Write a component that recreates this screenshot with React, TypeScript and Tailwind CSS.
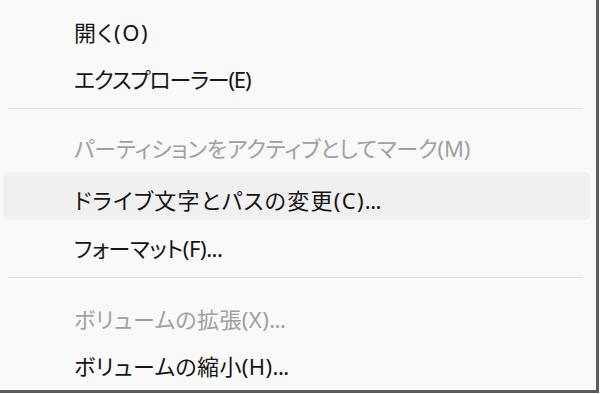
import React from "react";

const font = {
  fontFamily: '"Noto Sans", "Noto Sans CJK JP", sans-serif',
};

function Item({
  label,
  dots,
  disabled,
  active,
  h,
  pt,
  tr,
}: {
  label: string;
  dots?: boolean;
  disabled?: boolean;
  active?: boolean;
  h: string;
  pt?: string;
  tr?: string;
}) {
  return (
    <div
      className={
        h +
        " " +
        (pt ?? "") +
        " flex items-center text-[22px] leading-none [font-feature-settings:'palt'] " +
        (active ? "ml-[3px] mr-[6px] pl-[71px] bg-[#f0f0f0] rounded-[5px] " : "pl-[74px] ") +
        (disabled ? "text-[#a0a0a0]" : "text-[#151515]")
      }
    >
      <span className={tr ?? ""}>{label}</span>
      {dots && <span className="tracking-[-0.5px]">...</span>}
    </div>
  );
}

export default function App() {
  return (
    <div className="w-[601px] h-[394px] bg-white" style={font}>
      <div className="w-[599px] h-[393px] bg-[#f9f9f9] border-r-[3px] border-b-[3px] border-[#5c5c5c] pt-[8px] flex flex-col">
        <Item h="h-[47px]" tr="tracking-[1.5px]" label="開く(O)" />
        <Item h="h-[47px]" tr="tracking-[-1.2px]" label="エクスプローラー(E)" />
        <div className="h-[22px] pt-[6px] pl-[8px] pr-[13px]">
          <div className="h-[1px] bg-[#e2e2e2]" />
        </div>
        <Item h="h-[48px]" tr="tracking-[-0.2px]" label="パーティションをアクティブとしてマーク(M)" disabled />
        <Item h="h-[48px]" pt="pt-[8px]" tr="tracking-[1.3px]" label="ドライブ文字とパスの変更(C)" dots active />
        <Item h="h-[48px]" pt="pt-[8px]" tr="tracking-[-0.4px]" label="フォーマット(F)" dots />
        <div className="h-[27px] pt-[9px] pl-[8px] pr-[13px]">
          <div className="h-[1px] bg-[#e2e2e2]" />
        </div>
        <Item h="h-[47px]" tr="tracking-[0.4px]" label="ボリュームの拡張(X)" dots disabled />
        <Item h="h-[47px]" tr="tracking-[0.4px]" label="ボリュームの縮小(H)" dots />
      </div>
    </div>
  );
}
